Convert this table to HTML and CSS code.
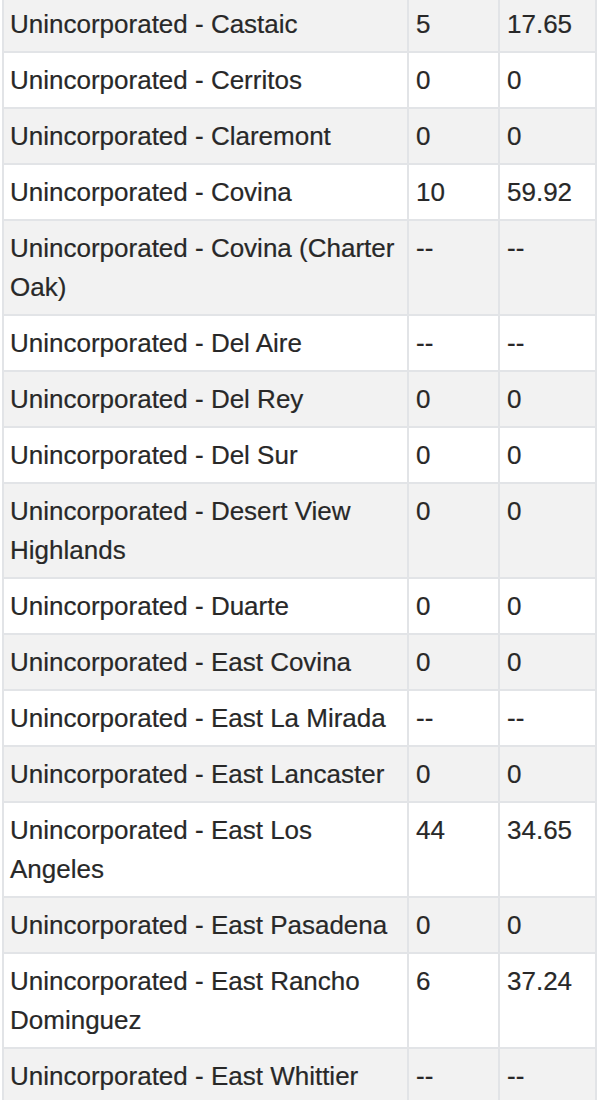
FILE: index.html
```html
<!DOCTYPE html>
<html lang="en">
<head>
<meta charset="utf-8">
<title>Unincorporated areas</title>
<link rel="stylesheet" href="styles.css">
</head>
<body>
<table class="data">
  <colgroup>
    <col class="c-name">
    <col class="c-num">
    <col class="c-rate">
  </colgroup>
  <tbody>
    <tr><td>Unincorporated - Castaic</td><td>5</td><td>17.65</td></tr>
    <tr><td>Unincorporated - Cerritos</td><td>0</td><td>0</td></tr>
    <tr><td>Unincorporated - Claremont</td><td>0</td><td>0</td></tr>
    <tr><td>Unincorporated - Covina</td><td>10</td><td>59.92</td></tr>
    <tr><td>Unincorporated - Covina (Charter Oak)</td><td>--</td><td>--</td></tr>
    <tr><td>Unincorporated - Del Aire</td><td>--</td><td>--</td></tr>
    <tr><td>Unincorporated - Del Rey</td><td>0</td><td>0</td></tr>
    <tr><td>Unincorporated - Del Sur</td><td>0</td><td>0</td></tr>
    <tr><td>Unincorporated - Desert View Highlands</td><td>0</td><td>0</td></tr>
    <tr><td>Unincorporated - Duarte</td><td>0</td><td>0</td></tr>
    <tr><td>Unincorporated - East Covina</td><td>0</td><td>0</td></tr>
    <tr><td>Unincorporated - East La Mirada</td><td>--</td><td>--</td></tr>
    <tr><td>Unincorporated - East Lancaster</td><td>0</td><td>0</td></tr>
    <tr><td>Unincorporated - East Los Angeles</td><td>44</td><td>34.65</td></tr>
    <tr><td>Unincorporated - East Pasadena</td><td>0</td><td>0</td></tr>
    <tr><td>Unincorporated - East Rancho Dominguez</td><td>6</td><td>37.24</td></tr>
    <tr><td>Unincorporated - East Whittier</td><td>--</td><td>--</td></tr>
  </tbody>
</table>
</body>
</html>
```
FILE: styles.css
```css
html, body {
  margin: 0;
  padding: 0;
  background: #ffffff;
}

body {
  font-family: "Liberation Sans", Arial, sans-serif;
  font-size: 26px;
  line-height: 39px;
  color: #282828;
}

.data {
  margin: -5px 0 0 2px;
  width: 595px;
  table-layout: fixed;
  border-collapse: separate;
  border-spacing: 0;
  border-left: 2px solid #e2e4e7;
  border-top: 2px solid #e2e4e7;
}

.c-name { width: 405px; }
.c-num { width: 91px; }
.c-rate { width: 97px; }

.data td {
  box-sizing: border-box;
  padding: 8px 6px 7px 6px;
  vertical-align: top;
  text-align: left;
  border-right: 2px solid #e2e4e7;
  border-bottom: 2px solid #e2e4e7;
  -webkit-text-stroke: 0.2px #282828;
}

.data td + td {
  padding-left: 7px;
}

.data tr:nth-child(odd) td {
  background: #f2f2f2;
}

.data tr:nth-child(even) td {
  background: #ffffff;
}
```
